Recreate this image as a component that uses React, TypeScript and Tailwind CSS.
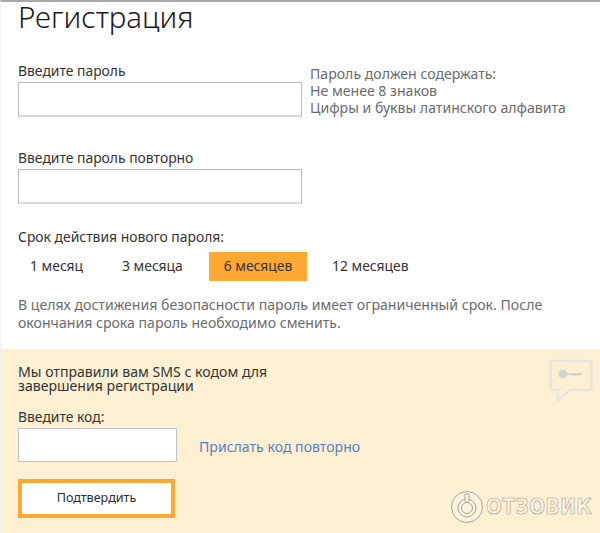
const font = "font-['Noto_Sans',sans-serif]"

const periods = ['1 месяц', '3 месяца', '6 месяцев', '12 месяцев']

function Field ({ label, widthClass }: { label: string, widthClass: string }) {
  return (
    <div>
      <label className="block text-[13.9px] leading-[18px] text-[#333]">{label}</label>
      <input className={`mt-[2px] block h-[35px] bg-white border border-[#b9b9b9] border-b-2 border-b-[#d8d8d8] ${widthClass}`} />
    </div>
  )
}

export default function App () {
  return (
    <div className={`${font} relative w-[600px] h-[533px] overflow-hidden bg-white border-t-2 border-t-[#a8a8a8] border-l border-l-[#efefef]`}>
      <div className="pl-[17px] pr-4 h-[347px]">
        <h1 className="text-[29.5px] leading-[30px] font-light text-[#1a1a1a]">Регистрация</h1>

        <div className="mt-[30px] flex">
          <Field label="Введите пароль" widthClass="w-[284px]" />
          <div className="ml-[8px] mt-[3px] text-[14.1px] leading-[17px] text-[#6b6b6b]">
            <p>Пароль должен содержать:</p>
            <p>Не менее 8 знаков</p>
            <p>Цифры и буквы латинского алфавита</p>
          </div>
        </div>

        <div className="mt-[32px]">
          <Field label="Введите пароль повторно" widthClass="w-[284px]" />
        </div>

        <p className="mt-[24px] text-[13.9px] leading-[18px] text-[#333]">Срок действия нового пароля:</p>

        <div className="mt-[6px] flex text-[13.9px] text-[#333]">
          {periods.map(p => (
            <div
              key={p}
              className={
                p === '6 месяцев'
                  ? 'h-[29px] w-[98px] flex items-center justify-center bg-[#ffa834]'
                  : p === '1 месяц'
                    ? 'h-[29px] w-[92px] pl-[12px] flex items-center'
                    : p === '3 месяца'
                      ? 'h-[29px] w-[99px] pl-[12px] flex items-center'
                      : 'h-[29px] pl-[25px] flex items-center'
              }
            >
              {p}
            </div>
          ))}
        </div>

        <p className="mt-[15px] w-[570px] text-[14.1px] leading-[18px] text-[#6b6b6b]">
          В целях достижения безопасности пароль имеет ограниченный срок. После окончания срока пароль необходимо сменить.
        </p>
      </div>

      <div className="relative h-[184px] bg-[#fdf0d3] pl-[17px] pt-[16px]">
        <p className="text-[14.1px] leading-[14px] text-[#333]">Мы отправили вам SMS с кодом для<br />завершения регистрации</p>
        <label className="mt-[15px] block text-[13.9px] leading-[18px] text-[#333]">Введите код:</label>
        <div className="mt-[2px] flex items-center">
          <input className="block h-[34px] w-[159px] bg-white border border-[#c4c4c4]" />
          <a className="ml-[22px] mt-[4px] text-[14.1px] text-[#5b80c4]">Прислать код повторно</a>
        </div>
        <button className="mt-[17px] block h-[39px] w-[157px] bg-white border-[4px] border-[#ffa834] text-[12.6px] text-[#2b2b2b]">Подтвердить</button>

        {/* sms icon */}
        <svg className="absolute left-[547px] top-[8px]" width="46" height="46" viewBox="0 0 46 46" fill="none">
          <path d="M5 4h36a2.500 2.500 0 0 1 2.500 2.500v24a2.500 2.500 0 0 1-2.500 2.500H22l-12 10V33H5a2.500 2.500 0 0 1-2.500-2.500v-24A2.500 2.500 0 0 1 5 4z" stroke="#e6e5de" strokeWidth="2.500" />
          <circle cx="15" cy="17" r="4.500" fill="#d5d5cf" />
          <path d="M18 17h16M26 17v2M30 17v2" stroke="#d5d5cf" strokeWidth="2" />
        </svg>

        {/* watermark */}
        <div className="absolute left-[449px] top-[141px] flex items-center">
          <svg width="34" height="34" viewBox="0 0 34 34" fill="none" stroke="#a9a596" strokeWidth="1">
            <circle cx="17" cy="17" r="15.500" fill="#fbf3de" />
            <circle cx="17" cy="18" r="9" />
            <circle cx="17" cy="18" r="5.500" />
            <rect x="15" y="3.500" width="4" height="9" rx="2" fill="#fbf3de" />
          </svg>
          <span className="ml-[2px] text-[22px] leading-none font-bold tracking-[0.5px] text-[#fbf3de] font-['DejaVu_Sans',sans-serif] scale-x-[0.85] origin-left [-webkit-text-stroke:0.7px_#a9a596]">ОТЗОВИК</span>
        </div>
      </div>
    </div>
  )
}
